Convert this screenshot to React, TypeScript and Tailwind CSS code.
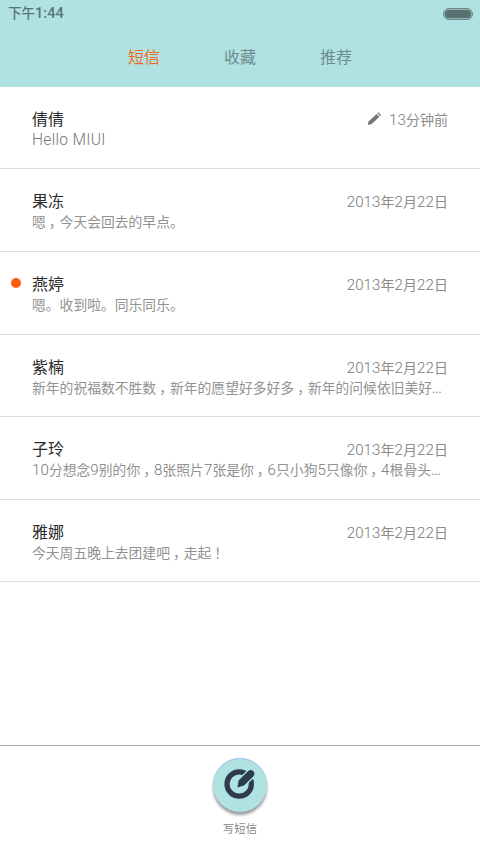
import React from "react";

type Message = {
  name: string;
  preview: string;
  time: string;
  unread?: boolean;
  draft?: boolean;
};

const messages: Message[] = [
  { name: "倩倩", preview: "Hello MIUI", time: "13分钟前", draft: true },
  { name: "果冻", preview: "嗯，今天会回去的早点。", time: "2013年2月22日" },
  { name: "燕婷", preview: "嗯。收到啦。同乐同乐。", time: "2013年2月22日", unread: true },
  { name: "紫楠", preview: "新年的祝福数不胜数，新年的愿望好多好多，新年的问候依旧美好...", time: "2013年2月22日" },
  { name: "子玲", preview: "10分想念9别的你，8张照片7张是你，6只小狗5只像你，4根骨头...", time: "2013年2月22日" },
  { name: "雅娜", preview: "今天周五晚上去团建吧，走起！", time: "2013年2月22日" },
];

// Latin runs are set slightly larger than the Chinese text; commas sit mid-cell.
function MixedText({ text }: { text: string }) {
  const parts = text.split(/([A-Za-z0-9 ]+|\.\.\.|，|！)/).filter(Boolean);
  return (
    <>
      {parts.map((part, i) => {
        if (part === "，" || part === "！")
          return <span key={i} className="pl-[3px] pr-[3.9px] [font-feature-settings:'halt']">{part}</span>;
        if (part === "...")
          return <span key={i} className="tracking-[-0.6px]">{part}</span>;
        if (/^[A-Za-z ]+$/.test(part))
          return <span key={i} className="text-[15.6px] font-light tracking-[0.3px] text-[#777]">{part}</span>;
        if (/^[0-9]+$/.test(part))
          return <span key={i} className="text-[15px] font-light tracking-[0.15px] text-[#777]">{part}</span>;
        return <span key={i}>{part}</span>;
      })}
    </>
  );
}

function PencilIcon() {
  return (
    <svg className="mr-[7px] h-[15px] w-[15px] -translate-y-[2px]" viewBox="0 0 15 15" fill="#777">
      <path d="M0.8 13.9 1.5 10.6 9.6 2.9 12.5 5.8 4.4 13.3Z" />
      <path d="M10.4 2.2 11.5 1.2 14.1 3.9 13.1 4.9Z" />
    </svg>
  );
}

function MessageRow({ message }: { message: Message }) {
  return (
    <li className="flex h-[82.65px] border-b border-[#dcdcdc] pr-8 pt-[22px]">
      <div className="flex w-8 shrink-0 pl-[11px] pt-[4px]">
        {message.unread && <span className="h-[10px] w-[10px] rounded-full bg-[#ff5a14]" />}
      </div>
      <div className="min-w-0 flex-1">
        <div className="flex h-[21px] items-center justify-between">
          <span className="text-[16px] leading-[21px] text-[#2c2c2c]">{message.name}</span>
          <span className="flex items-center whitespace-nowrap pt-[2px] text-[14px] leading-[21px] text-[#8c8c8c]">
            {message.draft && <PencilIcon />}
            <span><MixedText text={message.time} /></span>
          </span>
        </div>
        <p className="h-[21px] whitespace-nowrap text-[13.8px] leading-[21px] text-[#929292]">
          <MixedText text={message.preview} />
        </p>
      </div>
    </li>
  );
}

function ComposeIcon() {
  return (
    <svg className="h-[54px] w-[54px]" viewBox="0 0 54 54" fill="none">
      <circle cx="26.2" cy="26" r="12.2" stroke="#2d3b4e" strokeWidth="5.2" />
      <path
        d="M24.4 29.6 25.6 22.6 35.2 13.1Q37.9 10.8 40.3 13.2 42.6 15.7 40.4 18.3L31 27.6Z"
        fill="#2d3b4e"
        stroke="#b0e2e2"
        strokeWidth="2.8"
        paintOrder="stroke"
      />
    </svg>
  );
}

export default function App() {
  return (
    <div className="flex h-[853px] w-[480px] flex-col overflow-hidden bg-white font-['Roboto','Noto_Sans_CJK_SC',sans-serif]">
      <header className="h-[86.6px] shrink-0 bg-[#b0e2e2]">
        <div className="flex h-[27px] items-center justify-between pl-2 pr-[7px]">
          <span className="text-[13.5px] font-medium leading-[27px] text-[#5b7575]">下午<span className="text-[14.5px] tracking-[0.1px]">1:44</span></span>
          <span className="flex h-[12px] w-[30px] rounded-full border border-[#6c8787] bg-[#94b4b4] p-px">
            <span className="flex-1 rounded-full bg-[#577070]" />
          </span>
        </div>
        <nav className="flex justify-center pt-[19px] text-[16px] leading-[24px] text-[#6f8c8c]">
          <span className="w-24 text-center text-[#ee6c24]">短信</span>
          <span className="w-24 text-center">收藏</span>
          <span className="w-24 text-center">推荐</span>
        </nav>
      </header>
      <ul className="flex-1">
        {messages.map((m) => <MessageRow key={m.name} message={m} />)}
      </ul>
      <footer className="flex h-[108px] shrink-0 flex-col items-center border-t border-[#b0b0b0] pt-[12px]">
        <button className="flex h-[54px] w-[54px] items-center justify-center rounded-full bg-[#b0e2e2] shadow-[inset_0_1px_0_#9cc6ef,0_3px_3px_rgba(0,0,0,0.4)]">
          <ComposeIcon />
        </button>
        <span className="mt-[9px] text-[11.5px] leading-[17px] text-[#888]">写短信</span>
      </footer>
    </div>
  );
}
